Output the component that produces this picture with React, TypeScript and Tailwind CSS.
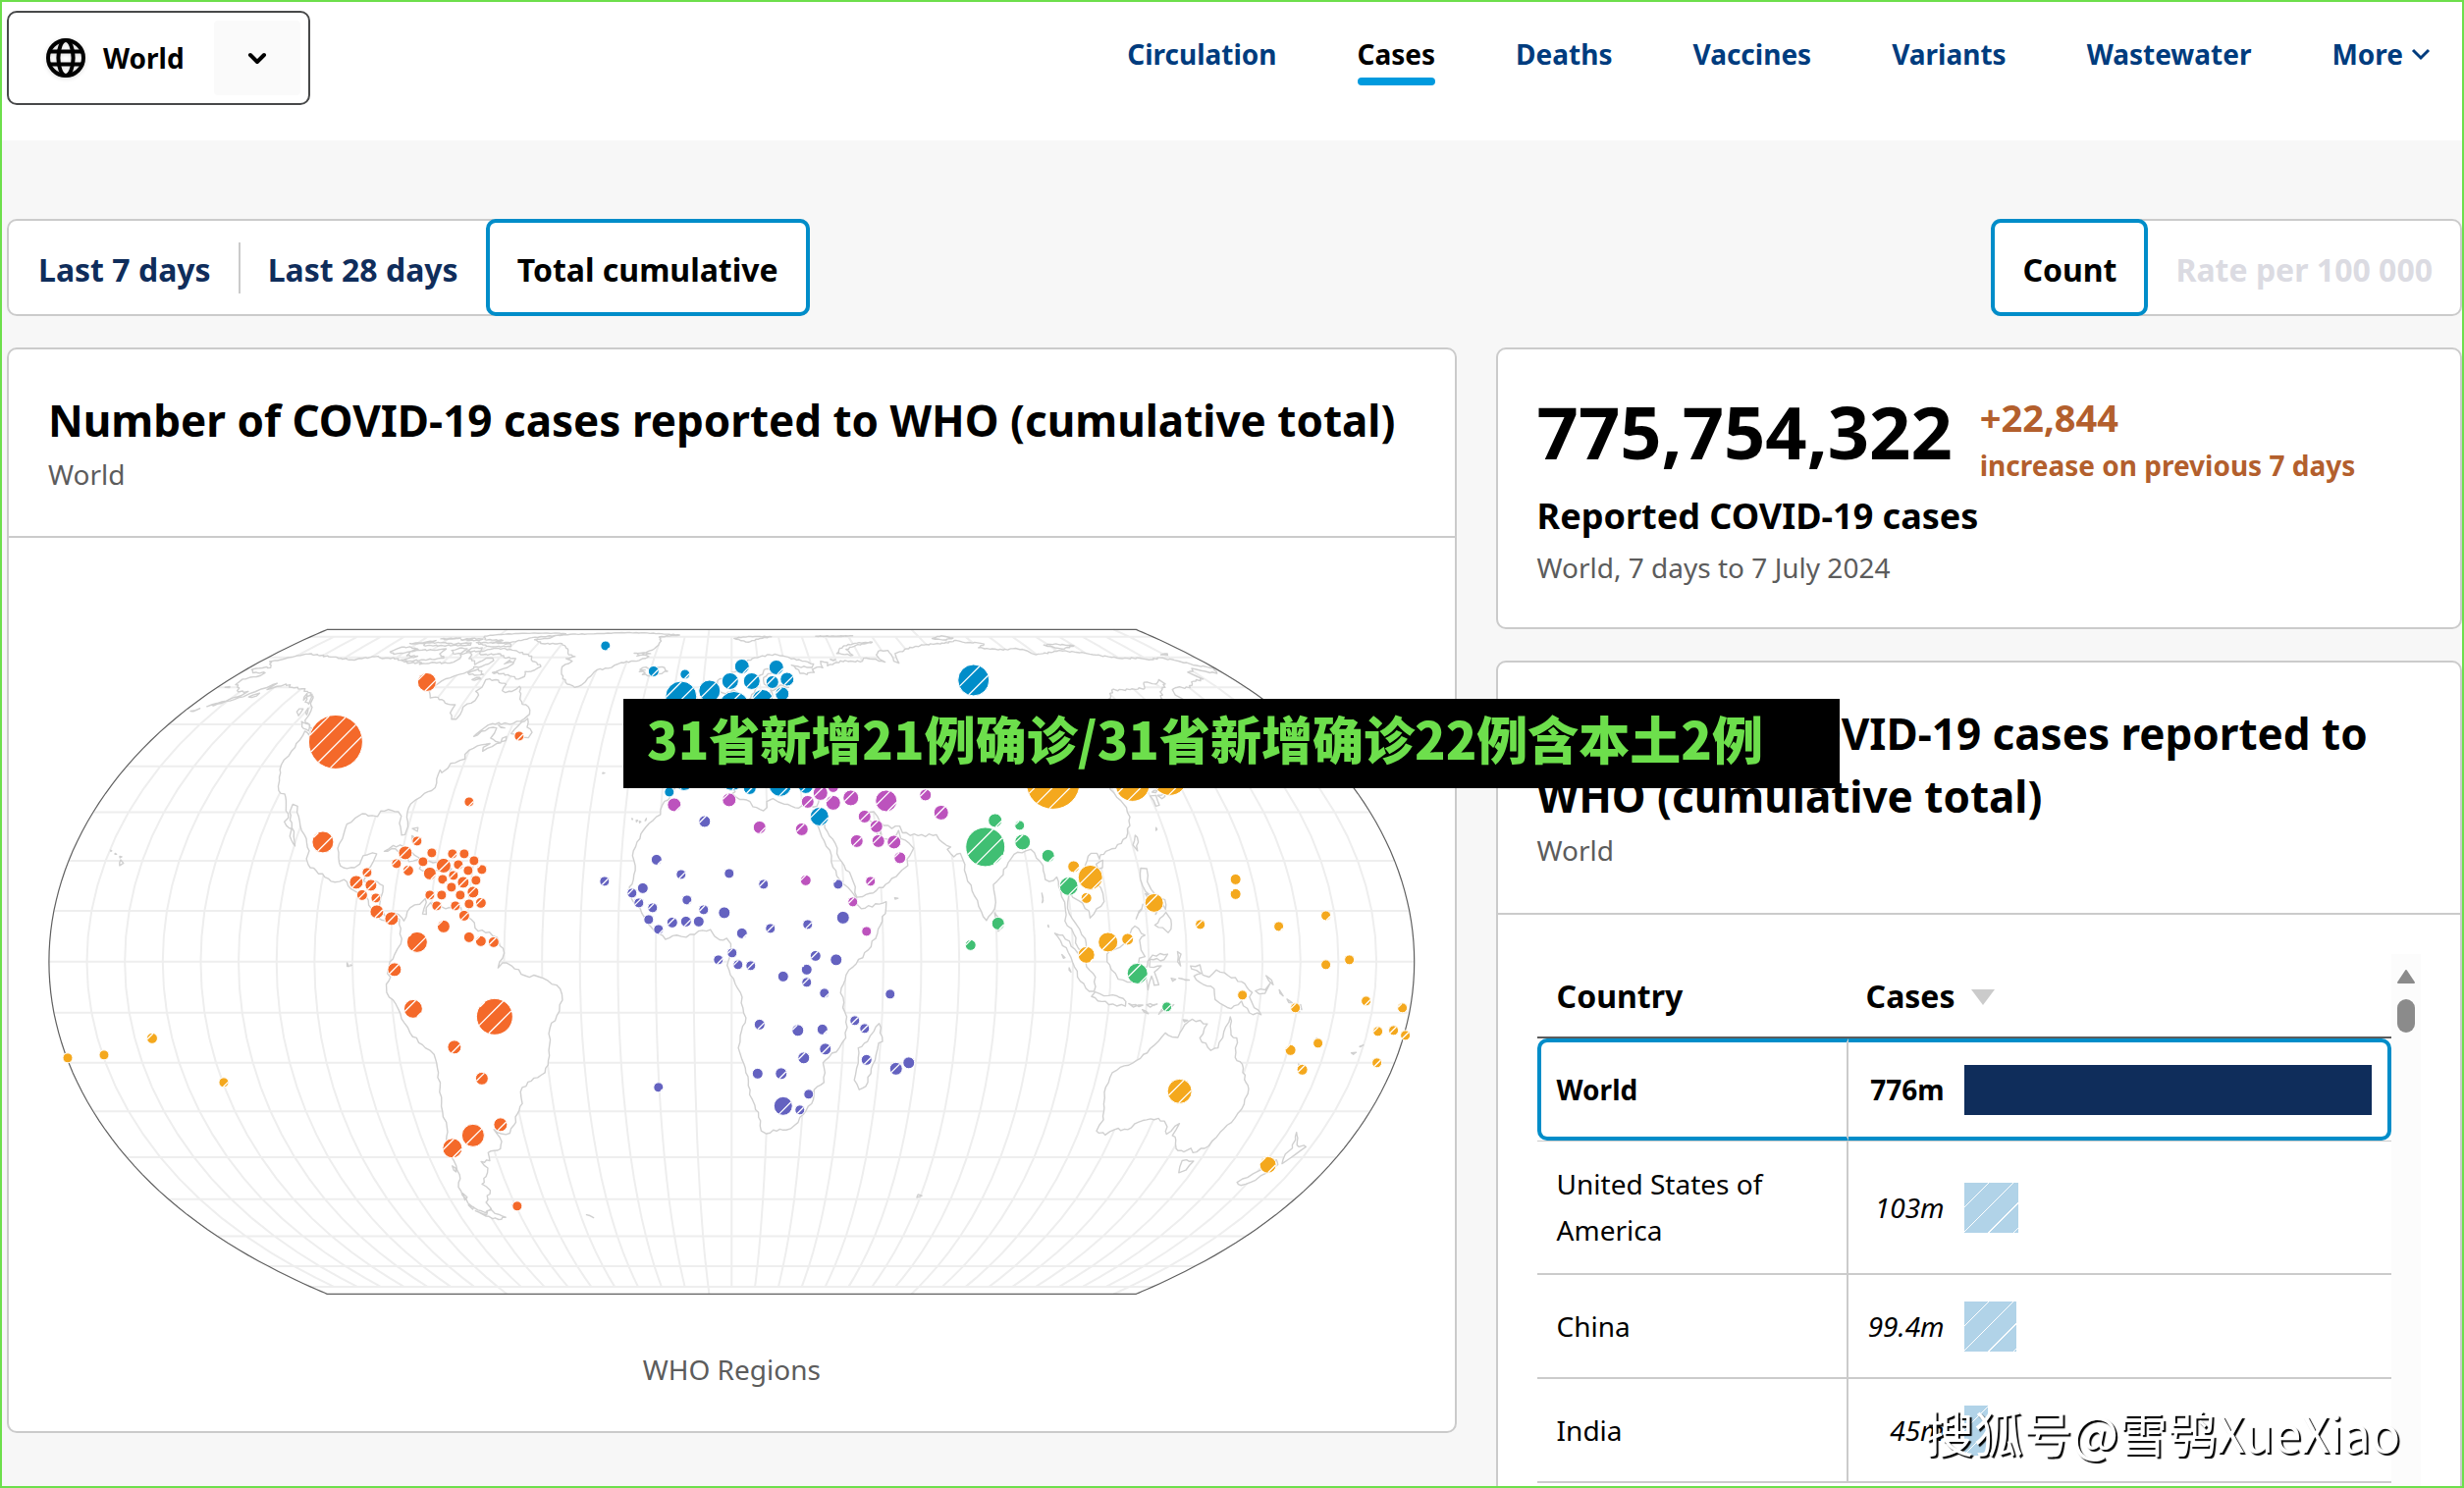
import React from "react";

type Bubble = [number, number, number];

const CENTER_X = 745.5;
const CENTER_Y = 980;
const SCALE = 257;
const CENTER_LON = 10;
const RAD = Math.PI / 180;

/* Equal Earth projection, centred on 10°E. */
function project(lon: number, lat: number): [number, number] {
  const m = Math.sqrt(3) / 2;
  const t = Math.asin(m * Math.sin(lat * RAD));
  const t2 = t * t;
  const t6 = t2 * t2 * t2;
  const l = Math.max(-180, Math.min(180, lon - CENTER_LON)) * RAD;
  const x = (l * Math.cos(t)) / (m * (1.340264 - 3 * 0.081106 * t2 + t6 * (7 * 0.000893 + 9 * 0.003796 * t2)));
  const y = t * (1.340264 - 0.081106 * t2 + t6 * (0.000893 + 0.003796 * t2));
  return [CENTER_X + SCALE * x, CENTER_Y - SCALE * y];
}

function line(points: [number, number][], close = false): string {
  return (
    points
      .map(([lon, lat], i) => {
        const [x, y] = project(lon, lat);
        return (i ? "L" : "M") + x.toFixed(1) + " " + y.toFixed(1);
      })
      .join("") + (close ? "Z" : "")
  );
}

function meridian(lon: number, limit: number): string {
  const pts: [number, number][] = [];
  for (let lat = -limit; lat <= limit; lat += 5) pts.push([lon, lat]);
  return line(pts);
}

const graticule: string[] = [];
for (let lon = -160; lon <= 180; lon += 10) graticule.push(meridian(lon, lon % 90 === 0 ? 90 : 80));
for (let lat = -80; lat <= 80; lat += 10) graticule.push(line([[-170, lat], [190, lat]]));

const sphere = (() => {
  const pts: [number, number][] = [];
  for (let lat = -90; lat <= 90; lat += 2) pts.push([-170, lat]);
  for (let lat = 90; lat >= -90; lat -= 2) pts.push([190, lat]);
  return line(pts, true);
})();

/* Small deterministic wobble so that long segments read as coast, not as rulers. */
function roughen(points: [number, number][]): [number, number][] {
  const out: [number, number][] = [];
  points.forEach((p, i) => {
    const q = points[(i + 1) % points.length];
    out.push(p);
    const d = Math.hypot(q[0] - p[0], q[1] - p[1]);
    const n = Math.min(8, Math.floor(d / 0.9));
    for (let k = 1; k < n; k++) {
      const f = k / n;
      const s = Math.sin((p[0] * 12.99 + p[1] * 78.2 + k * 37.7) * 3.1) * 0.26;
      out.push([p[0] + (q[0] - p[0]) * f + s * ((q[1] - p[1]) / d), p[1] + (q[1] - p[1]) * f - s * ((q[0] - p[0]) / d)]);
    }
  });
  return out;
}

const coastData: string[] = [
  // Americas
  "-168,65.6 -164,66.5 -162,66.2 -163.5,67.1 -166.5,68.4 -163,69.2 -160,70.6 -156.6,71.3 -152,70.8 -145,70.1 -141,69.6 -136,69 -133,69.5 -128,70.4 -125,69.5 -121,69.8 -115,68.3 -112,67.8 -108,68 -108,67.4 -103,68 -98,67.8 -96,68.2 -95,69.5 -96.5,71 -94.5,72 -92,71 -91.5,69.5 -88.5,68.7 -87,67.3 -85.5,68.7 -85,69.7 -82.5,69.7 -81.3,68.8 -82,67.5 -84.5,66.3 -86.5,66.5 -86,66 -88,64.3 -90.5,63.5 -93.5,61.9 -94.7,60 -94.6,58.8 -92.5,57 -90.8,57.2 -88,56.5 -85,55.3 -82.3,55.1 -82.2,52.9 -80.5,51.3 -79,51.3 -78.6,52.5 -79.2,54.5 -76.6,56.3 -76.7,57.8 -78.5,58.8 -77.4,60 -78.1,62.3 -74.5,62.3 -71.5,61.2 -69.6,60.9 -69.5,59 -68,58.5 -66,58.8 -64.5,60.3 -62.5,58.2 -61.7,56.6 -60,55.2 -57.5,54.5 -56,52.6 -57.1,51.4 -60,50.2 -66.5,50.2 -68.6,49 -70.5,47 -67,49.1 -64.6,49.1 -64.5,47.8 -65,46.6 -63,45.8 -61.3,45.5 -63.5,44.6 -65.8,43.5 -66.1,44.4 -64.5,45.3 -67,45 -70,43.8 -70.8,42.8 -70.2,41.7 -71.5,41.4 -74,40.7 -74.2,39.6 -75.5,38.6 -76.3,39.2 -76.3,37.2 -75.8,35.3 -77.5,34.4 -79,33.3 -81.2,31.8 -81.4,30 -80.1,27 -80.3,25.3 -81.2,25.2 -82.7,27.7 -82.8,29.2 -84,30.1 -86,30.4 -89,30.3 -89.4,29.1 -91,29.3 -94,29.7 -95.5,28.8 -97.3,27.5 -97.3,25.5 -97.8,22.5 -96.5,19.7 -95,18.6 -92,18.6 -90.8,19.3 -90.4,21 -88,21.6 -86.8,21.4 -87.7,18.8 -88.3,18.3 -88.9,15.9 -86,15.9 -83.4,15 -83.6,12.5 -83.7,11 -82,9 -79.6,9.6 -77.4,8.6 -76.8,8 -75.5,10.6 -73,11.3 -71.7,12.4 -71.3,11.7 -71.8,10.4 -72,9.4 -71,9.3 -71.2,10.6 -70.2,11.6 -68.3,10.7 -66,10.4 -62,10.7 -61,9 -59,8.3 -57,6 -54,5.8 -52,4.8 -50,1.7 -51.2,0 -51.6,-1.2 -50.4,-.2 -48.5,-.6 -48,-.8 -44.5,-2.7 -41,-2.9 -38.5,-3.7 -35.3,-5.3 -34.8,-7.5 -36.5,-10.6 -38.5,-13 -39,-16.5 -39.7,-19.5 -41,-22 -43.2,-23 -46,-23.9 -48.5,-25.9 -48.6,-28.4 -50.5,-30.5 -52.3,-33 -54,-34.7 -56.5,-34.8 -58.3,-33.9 -57.2,-35.6 -57,-36.5 -58,-38.1 -62,-39 -62.3,-40.8 -65,-41 -63.7,-42.5 -65.3,-44.5 -67.5,-46.3 -65.8,-47.8 -69,-50.8 -68.4,-52.4 -71,-53.5 -73,-52.8 -75,-51 -75.3,-47 -73.5,-45 -73,-42 -73.7,-39.5 -73.2,-37 -71.6,-33.5 -71.5,-30 -70.5,-25 -70.1,-20 -70.4,-18.3 -72.5,-17 -76,-14 -77.2,-12 -79,-8.3 -81.2,-6 -81.2,-4.4 -80,-3 -80.8,-2.3 -80.1,0 -78.9,1.4 -77.3,3.5 -77.5,6.5 -78,8.3 -79.5,9 -80.5,7.4 -82.8,8.2 -83.6,8.6 -85,10 -85.8,10.5 -87.5,12.8 -89.5,13.4 -92,14.4 -94.2,16.2 -96.5,15.7 -99.5,16.7 -102.2,18 -104.7,19.2 -105.6,20.4 -105.4,22 -108,25.2 -109.3,26.2 -110.7,28 -112.5,30 -113.1,31.3 -114.7,31.7 -114.6,30 -112.8,27.8 -111.3,26 -109.7,23 -110.3,23.4 -112,25 -112.2,26.5 -114,27.2 -115,28 -114.3,28.8 -115.8,30.3 -117.1,32.5 -118.4,33.9 -120.6,34.6 -122,36.8 -123.8,39.3 -124.3,40.4 -124,43.5 -124,46.2 -124.6,48.3 -122.4,47.4 -123,49 -127.5,51 -128.5,53.5 -130.4,55 -133,57.5 -136,58.5 -139.7,59.6 -144,60 -147.5,61 -151.5,59.3 -151,61.2 -153.8,59.5 -156.5,57.3 -161,55.5 -164.5,54.6 -161.5,55.9 -157.7,57.7 -157.2,58.8 -160.5,58.7 -162,59.8 -165,60.8 -165.5,62.5 -161,63.6 -161,64.5 -165.5,64.5",
  // Tierra del Fuego
  "-68.6,-52.7 -68,-53.7 -65.2,-54.7 -68,-55.3 -71.5,-54.4 -74,-53 -71,-54 -70,-53",
  "-75,-48.5 -74.2,-49.5 -75.4,-50.2",
  "-74.2,-42 -73.5,-42.5 -73.8,-43.4 -74.3,-43",
  "-75.2,-51.5 -73.8,-52 -74.6,-52.6",
  // Greenland
  "-73,78.2 -68,76 -60,76 -56,73.5 -54,71 -51,70.3 -54,69.5 -51,68.5 -53.5,66.5 -52,64 -49,61.5 -45,60 -42.8,60.8 -41,63.5 -39.8,65.5 -36,66 -32,68 -25.5,68.8 -22.3,70.3 -25,71.5 -21.8,73 -20,75.2 -19.5,77.5 -21,80 -12.5,81.4 -18,82.1 -28,83.3 -38,83.6 -50,82.3 -60,82 -66,80.8 -67,79.3",
  "-27,70.5 -25.5,70.9 -28.5,71.6 -25,71.8 -22,71.5",
  // Canadian Arctic
  "-61.5,66.6 -63.8,65 -66,64.9 -65,63.3 -66.5,62.5 -71.5,63.9 -77.8,64.6 -73.8,66.2 -72.7,67.5 -73.5,69.5 -78.5,70 -81,71.3 -88.5,71 -90,72.3 -86,73.7 -81,73.5 -77,72.8 -71,71.2 -68,70.4 -67,69 -64,67.9",
  "-117,69 -113,68.6 -105.5,69.2 -101.5,69.7 -105,71.3 -105,73.5 -108,73 -114,73 -118,72.4 -117,70.6 -112.5,70.4",
  "-123,71.2 -125.8,72.2 -124,74.3 -120,74.2 -116,73.3 -119,72",
  "-100,71.5 -97,71.5 -96.5,73.5 -99,73.9 -102,72.8",
  "-90,72.5 -95.5,72.3 -95,73.9 -91,74",
  "-80,74.7 -88,74.5 -92,75.3 -96,76.6 -90,76.6 -81,75.8",
  "-97,75.2 -104,75.1 -108,75 -116,75.1 -117,76.4 -109,76.6 -105,75.8 -98,76.5",
  "-76.5,78.5 -82,76.6 -89,76.5 -86,77.8 -94,78.3 -96,80.5 -91,81.8 -80,83 -65,83 -62,82.4 -66,81 -75,79.5",
  "-96,77.7 -104,78.2 -100,79 -95,78.6",
  "-114,77.7 -119,76.5 -123,76.1 -120,75.9 -115,76.4",
  "-110,78.3 -113,78.7 -105,79.2",
  "-86.5,64.4 -84,65.7 -80.5,64 -83.5,63.7",
  "-83,62.3 -80,62.5 -82,63",
  "-76,67.5 -73.5,68.2 -75.2,68.9",
  // Newfoundland and the Gulf of St Lawrence
  "-59.2,47.7 -55.8,46.9 -53.3,46.7 -52.8,48 -55,49.3 -56,51.5 -57.5,50.5",
  "-64.4,49.8 -62,49.1 -63.6,49.4",
  "-61.4,46.6 -60.3,47 -60,46 -61.3,45.7",
  // Pacific coast islands
  "-128.3,50.7 -125,50 -123.5,48.4 -125.8,49",
  "-133,54 -131.7,54 -131,52.2 -132.8,53.2",
  "-134,58 -132.5,56.5 -131.5,55.3 -133.3,55.8 -134.8,57.2",
  "-136,58.2 -134.9,57.4 -134.7,56.4 -135.6,57.2",
  "-130.3,54.2 -129.2,53.2 -128.6,52.4 -129.8,53.1",
  "-154.5,57.2 -152.3,57.5 -152.5,58.3 -154,57.8",
  "-168,53.4 -166,54.1 -167,53.3",
  "-166,60.2 -165.6,59.9 -167.3,60",
  // Caribbean
  "-84.9,21.9 -82.8,23.1 -80,22.9 -77.3,21.7 -74.2,20.2 -77.6,19.8 -78.5,21.2 -82,22.4",
  "-74.4,18.4 -73,19.9 -70,19.7 -68.4,18.6 -71.4,17.6",
  "-67.2,18.4 -65.7,18.4 -66,18",
  "-78.3,18.4 -76.3,18.1 -77.5,17.8",
  "-78.3,25.1 -77.8,23.8 -77.6,24.8",
  "-78.7,26.6 -77.2,26.8 -77.1,26",
  // Hawaii
  "-156,20.2 -154.9,19.5 -155.7,19 -156,19.6",
  "-156.6,20.9 -156,20.8 -156.4,20.6",
  "-158.2,21.5 -157.7,21.3 -158.1,21.3",
  "-159.7,22.1 -159.4,22 -159.6,21.9",
  // Galapagos
  "-91.4,-.2 -90.9,-.9 -91.4,-.9",
  "-90.5,-.6 -90.2,-.7 -90.5,-.8",
  // Falklands and South Georgia
  "-61,-51.4 -58,-51.5 -60,-52.2",
  "-38,-54 -36,-54.8 -37,-54.3",
  // Iceland
  "-24,65.6 -22,66.4 -20.3,65.7 -16,66.5 -13.6,65 -18.5,63.5 -22.5,63.9 -21.8,64.6 -24,64.9 -22,65.4",
  // Great Britain
  "-5,58.6 -3,58.6 -2,57.5 0,53 1.5,52.5 1,51 -5,50 -4,53 -3,54.9 -5,55.5 -6,57",
  // Eurasia and Africa
  "28,71 31,70.3 33,69.4 36,69.1 41,67.5 40,66.3 35,66.6 32.5,67.1 34.8,65.5 35,64.3 37.5,63.9 37.8,64.4 40.3,64.6 40,65.6 42,66.4 44,66.2 44,68.5 46.5,68 46,66.9 49,67.8 53.5,68.8 54.5,68.4 60,68.5 61,69.6 64.5,69.3 68.5,68.2 67,69.5 66.8,71 68.5,72.5 72.5,72.8 72.7,71 72,68.5 73.5,67.8 74,70 74.5,71.5 76,72 78,72.3 80.5,73.6 87,75 90,75.6 98,76.2 104.3,77.7 107,76.5 112,76.5 114,75.8 110,74 113,73.7 119,73 123.5,73.6 127,73.3 129.5,71 133,71.5 139.5,72.4 141,72.8 150,71.6 153,70.9 159.5,69.7 161,69.5 168,69.7 170.5,69 176,69.8 180,68.9 185,67 189.8,66.1 187.5,64.3 184.5,65 181.3,66 180,65 177.5,64.7 179.3,62.5 174.5,61.8 170.3,59.9 166,60 163.2,59.3 162,57.8 163.2,56 161.7,55 160,53.2 156.7,51 155.6,55 156,57 159,59 163.3,61 163,62.3 160,61 156.5,61.5 154.3,59.8 148.5,59.3 142,59.2 135.2,54.8 139,54 141,53 140,48.5 135.5,44.2 132,43.2 130,42 127.5,39.7 129.4,37 129.2,35.3 126.4,34.6 126.5,37.5 125,38 124.5,40 121.5,39 121.8,40.8 118,39.2 119,37.3 122.4,37.2 119.3,35 121,32.5 121.8,31 121.8,29 119.6,25.6 117,23.5 114,22.4 110.5,21.2 110,20.4 109.7,21.5 108,21.5 106.5,20 105.7,19 107.5,16.5 109.2,13.5 109.2,11.8 107,10.4 105,8.6 104.9,10 102.5,12 101,12.7 100.6,13.4 100,13 99.3,10.5 100.3,8.4 102,6.4 103.4,4.5 103.5,2.5 104.2,1.4 103.5,1.3 101.3,2.9 100.4,5.5 98.3,8 98.7,10.5 98,14 97.5,16.7 95.3,15.8 94.3,16.2 94.3,19 91.8,22.3 90.4,22 88,21.7 87,21.3 85,19.6 82.3,16.6 80.2,15.2 80.3,13 79.9,10.4 78.2,8.9 77.5,8.1 76.3,9.9 74.8,13 73.2,17 72.8,20.3 72.4,21.5 70.5,20.8 69,22.3 70,22.8 68,23.7 66.6,25.3 61.5,25.1 57.3,25.7 56.8,27.1 54.5,26.6 51.5,27.9 50.1,30.1 48.6,30 48,29.5 50,26.7 50.3,25.5 50.8,24.8 51.3,26.1 51.5,24.5 54,24.1 56.3,26.2 56.6,24.5 58.7,23.6 59.8,22.5 57.7,20.3 57.7,19 55.2,17.5 52.2,15.6 48.7,14 45,12.8 43.4,12.7 42.7,15.7 42.2,16.8 39.2,20.5 38.5,23.5 36.5,26 34.9,29.4 34.3,28 33.2,28.6 32.5,30 32.6,29.8 33.5,27.8 35.5,24 37.2,21 37.4,18.7 39.5,15.4 41.2,14.6 43.2,12.5 43.1,11.5 44.5,10.4 51.2,11.8 51,10.4 48.5,5.5 46,2.3 42,-1 40.2,-2.6 38.8,-6.1 39.5,-7 39.5,-9 40.6,-10.8 40.6,-15 39,-17 36.3,-18.9 34.8,-20 35.5,-22 35.4,-24 32.8,-25.5 32.8,-27.5 31,-29.8 28,-33 25.7,-34 22,-34 20,-34.8 18.5,-34.2 18.2,-32 16.5,-28.7 15,-26.5 14.5,-22.8 12.8,-19.3 11.8,-17 12.3,-14.5 13.8,-11 13,-9 12.3,-6 9.7,-2.6 8.8,-.7 9.5,1 9.8,3.5 8.7,4.6 6.8,4.3 5.5,5 4.4,6.3 1.2,6 -2,4.8 -4.5,5.2 -7.5,4.4 -9.2,5.5 -11.4,6.9 -13.2,8.8 -15,11 -16.7,12.4 -17.4,14.7 -16.4,16.2 -16.1,19 -17,21 -16,23.8 -14.5,26.2 -13,27.7 -10,29.5 -9.7,31.5 -6.8,34 -5.9,35.8 -2.5,35.2 0,36 5,36.8 10,37.3 11,36.9 10.5,35.5 11,34.4 10.2,34 11.5,33.1 15.2,32.3 16,31.2 19,30.3 20,31 20,32.3 21.8,32.9 23.3,32.2 25,31.7 29,30.9 31,31.5 34.2,31.3 35,33 36,36.3 30,36.3 27,37.5 26.5,40 23,40 23,37 20,39.5 19,42 13.5,45.5 16,41 18,40 16,38 12,42 8,44 3,43 0,39 -5,36.5 -9,37 -9,43 -2,43.5 -1,46 -4,48.5 2,51 5,53.5 8.5,54 8.1,56.8 10.6,57.7 10,56 11,54 14,54 19,54.5 21,55 21.5,57.5 24,57.3 23.5,59.2 28,59.6 30,60 28,60.6 23,59.9 21.5,61 21.5,63 25.3,65 24,65.8 22,65.5 21.3,64 17.5,62.2 17.2,60.7 18.8,60 16.5,57 14.3,55.5 12.8,55.5 11.2,59 10.5,59.3 8,58.1 5.6,58.8 5,62 8.5,63.5 12,65.5 14.5,68 19,69.8 25,71",
  // Arctic islands of Eurasia
  "11,79 15,80 20,80.3 27,80.1 22,79 17,76.8 14,77.6",
  "51.5,71.5 53,73 56,75 62,76.3 68.5,76.8 61,75.2 56,73.3 57.5,70.8",
  "95,79 100,80.8 104,79.2 99,78",
  "138,75.3 143,75.8 150,75 143,73.4",
  "178.5,71 182,71.5 181,70.9",
  "46,80.5 54,80.6 62,80.8 55,80.2",
  "48,69.2 50,69.1 49,68.7",
  // Madagascar, Socotra, Sri Lanka
  "49.3,-12.1 50.5,-15.7 49.5,-16 49,-18.5 47,-24.8 45.3,-25.5 43.7,-23.5 44.4,-20 44.1,-17 46.5,-15.7 48,-13.7",
  "53.5,12.6 54.4,12.5 53.6,12.3",
  "79.8,9.6 81.3,8.4 81.8,6.8 80.5,6 79.8,7.5",
  // Andamans and Nicobars
  "92.9,13.5 93,12 92.7,11.6",
  "93.8,7.2 93.9,6.8 93.7,7",
  // Hainan, Taiwan, Philippines
  "108.8,19.3 110.8,20.1 110.3,18.6 109,18.3",
  "121.5,25.2 121.9,24.8 120.9,22 120.1,23.2",
  "120.6,18.5 122.2,18.4 121.6,15.8 122.3,14.2 124,13 123.5,12.6 120.7,13.8 119.9,16.3",
  "125.3,9.7 126.4,8.3 126.2,6.4 125.4,5.7 124,6.7 122,7.2 123.5,8.5",
  "122,11.8 123.2,11.5 122,10.5",
  "123.4,10.9 122.5,9.3 124,10.8",
  "124.4,12.5 125.5,12.2 125.3,10.3 124.8,11.2",
  "119.4,11.3 117.2,8.4 118.9,10.2",
  "120.5,13.4 121.4,13.1 121.1,12.3",
  // Japan
  "130,33.5 131.7,33.6 131.4,31.5 130.3,31.3",
  "132.2,33.6 134.5,34.2 134.2,33.4 133,32.9",
  "131,34.3 135,35.6 140,37 140.7,35.6 138.6,34.7 135.8,33.6 134,34.7",
  "128,26.8 128.1,26.4 127.7,26.2",
  // Indonesia, Malaysia, New Guinea
  "95.4,5.6 97.5,5.2 100.5,2.5 103.2,.7 103.6,-1 106,-3 105.8,-5.8 104.5,-5.8 102,-3.8 100.4,-1 98.8,1.8",
  "97.1,1.4 97.9,.8 97.5,.7",
  "99,-1.2 99.5,-2 99,-1.6",
  "105.2,-6.8 106.1,-5.9 108.5,-6.7 110.8,-6.5 112.7,-7 114.4,-7.8 114.4,-8.7 111,-8.3 108,-7.8",
  "109,1.5 109.6,2 111.3,2.5 113.5,3.5 115.3,5.5 116.7,7 119.2,5.2 117.7,4.2 118,2.3 119,1 117.5,.7 116.5,-1.7 116.2,-4 114.5,-4 112,-3.4 110.1,-1.5 109,0",
  "120,-5.5 119.5,-3.5 118.8,-2.7 119.8,.2 121,1.3 125,1.5 124,.4 120.3,.5 120.2,-1 123.3,-.8 121.5,-2 122.3,-3.5 122.8,-4.5 121.6,-4.6 120.8,-2.8 120.3,-4",
  "127.6,2 128.5,1.5 128,.4 128.4,-.8 127.6,0",
  "128,-3.2 130.8,-3.6 129,-3.4",
  "126,-3.2 127.2,-3.4 126.4,-3.8",
  "115.2,-8.2 116.5,-8.9 119,-8.5 118,-8.8",
  "120,-8.4 122.8,-8.3 121,-8.9",
  "123.5,-10.3 125,-8.9 127.2,-8.4 125.2,-9.4",
  "119,-9.4 120.7,-10.2 119.6,-9.9",
  "131,-.8 133.5,-.6 134.3,-2.6 136,-3 137.8,-1.6 141,-2.7 144.6,-3.9 147.6,-6 147,-6.9 148.6,-9 150.7,-10.4 147.5,-10 145,-7.7 142.5,-9.2 139.5,-8.2 138,-7.4 137.5,-5.3 133.5,-4 132,-2.8 133.8,-2.3 131.3,-1.4",
  "148.4,-5.7 151,-5.5 152.2,-4.2 151,-6.2 149.5,-6.3",
  "151,-2.7 153,-4.5 152.5,-3.6",
  "154.7,-5.5 155.9,-6.7 155,-6.2",
  "157,-7.3 158.5,-8 157.6,-8",
  "159.7,-9.3 160.8,-9.8 159.8,-9.8",
  "160.8,-8.4 161.3,-9.4 160.9,-9",
  // Pacific islands
  "164,-20.2 166.9,-22.2 165,-21.4",
  "166.8,-15 167.1,-15.5 166.7,-15.6",
  "167.4,-16.2 167.8,-16.5 167.4,-16.5",
  "177.3,-18 178.6,-17.9 178,-18.3",
  "179,-16.7 179.9,-16.4 179.2,-16.8",
  "145.8,43.4 145,43 141,41.5 140,42",
  // Australia and New Zealand
  "114,-22 113.7,-24 113.3,-26 114.2,-28.5 115.7,-31.8 115,-34.2 118,-35.1 120,-33.9 123.8,-33.9 126,-32.3 129,-31.6 131.2,-31.5 134,-32.7 135.6,-34.9 137.8,-32.6 137.5,-35.2 138.5,-35.5 139.7,-37 140.7,-38.1 143.5,-38.8 145,-38 146.4,-39 149.8,-37.5 150.8,-34.5 152.8,-31.5 153.5,-28.5 152.9,-25.3 150.8,-23.4 148.8,-20.3 146.3,-18.9 145.4,-15 143.7,-14.4 142.6,-10.8 141.6,-13.8 141,-17 139.2,-17.5 135.5,-15 136.8,-12.2 132.6,-11.3 130.8,-12.4 129.6,-14.9 128,-14.8 126,-14 123.6,-16.5 122.2,-18 119,-20 116.8,-20.6",
  "130.2,-11.4 131.4,-11.5 130.6,-11.8",
  "144.7,-40.8 148.2,-40.9 147.8,-43 146.2,-43.6 145.3,-42.3",
  "172.8,-34.5 174.8,-36.5 175.5,-37.3 178.5,-37.7 177,-39.5 175.3,-41.5 174,-39.3 174.8,-38",
  "172.7,-40.6 174.3,-41.7 172.8,-43.8 170.7,-45.8 168.5,-46.6 166.5,-45.9 170,-43.2 171.5,-41.8",
  "69,-48.8 70.4,-49.1 69,-49.6",
  // Canaries and Azores
  "-17.9,28.7 -17.7,28.5 -17.9,28.5",
  "-16.7,28.3 -16.3,28.3 -16.6,28",
  "-15.8,28.1 -15.4,28 -15.7,27.8",
  "-14.2,28.2 -13.9,28.7 -14,28.3",
  "-28,38.6 -27.4,38.5 -28,38.4",
];

const coast = coastData
  .map((s) => line(roughen(s.split(" ").map((p) => p.split(",").map(Number) as [number, number])), true))
  .join("");

const regions: { name: string; color: string; bubbles: Bubble[] }[] = [
  {
    name: "Americas",
    color: "#f4692a",
    bubbles: [
      [435, 695, 9], [342, 756, 27], [478, 817, 4.5], [329, 858, 10.5], [425, 857, 4.5], [413, 869, 6.5], [404, 880, 4.5],
      [416, 887, 5], [440, 869, 4.5], [431, 878, 4.5], [438, 890, 6], [452, 882, 7], [461, 870, 4.5], [473, 870, 4.5],
      [483, 877, 4.5], [467, 881, 4.5], [477, 887, 4.5], [491, 886, 4.5], [462, 892, 4.5], [451, 896, 4.5], [472, 899, 5.5],
      [485, 897, 4.5], [460, 904, 4.5], [469, 912, 4.5], [482, 909, 5.5], [438, 912, 4.5], [450, 912, 4.5], [445, 923, 4.5],
      [464, 923, 4.5], [478, 921, 4.5], [490, 920, 5], [473, 933, 5], [363, 899, 6.5], [374, 889, 4.5], [378, 902, 5.5],
      [369, 912, 5], [383, 915, 4.5], [384, 929, 6.5], [399, 936, 6.5], [452, 944, 6], [425, 960, 10], [478, 955, 5],
      [490, 959, 5], [503, 960, 5], [402, 988, 6.5], [421, 1028, 9], [504, 1036, 18], [463, 1067, 6.5], [491, 1099, 6],
      [510, 1146, 6.5], [482, 1157, 11], [461, 1170, 9.5], [527, 1229, 4.5], [529, 750, 4.5],
    ],
  },
  {
    name: "Europe",
    color: "#008dc9",
    bubbles: [
      [617, 658, 4.5], [666, 684, 5], [698, 687, 4.5], [694, 710, 15.5], [723, 704, 10.5], [744, 694, 8], [756, 679, 7],
      [766, 694, 8], [791, 680, 7], [787, 695, 6], [802, 692, 6.5], [777, 713, 10], [797, 707, 6.5], [748, 720, 15],
      [992, 693, 15.5], [682, 807, 4.5], [697, 795, 10], [746, 793, 12], [764, 803, 6], [795, 800, 11], [821, 801, 7],
      [835, 832, 9],
    ],
  },
  {
    name: "Eastern Mediterranean",
    color: "#bc53bd",
    bubbles: [
      [687, 820, 6.5], [743, 815, 6.5], [774, 843, 6], [817, 845, 6], [823, 817, 6], [836, 808, 7], [849, 818, 7],
      [849, 802, 5], [867, 813, 7.5], [903, 816, 10.5], [881, 832, 6], [893, 842, 6], [873, 857, 6], [895, 857, 6],
      [911, 858, 6.5], [917, 874, 5.5], [943, 810, 5.5], [959, 828, 7], [821, 897, 5], [887, 898, 4.5], [869, 919, 4.5],
      [883, 949, 4.5],
    ],
  },
  {
    name: "Africa",
    color: "#6462c0",
    bubbles: [
      [718, 837, 5.5], [669, 876, 5], [694, 891, 4.5], [743, 890, 4.5], [616, 898, 4.5], [778, 901, 4.5], [854, 901, 4.5],
      [655, 905, 5], [644, 910, 4.5], [651, 920, 4.5], [665, 925, 4.5], [700, 917, 4.5], [717, 927, 4.5], [738, 930, 5.5],
      [661, 937, 4.5], [671, 947, 4.5], [685, 940, 5], [699, 939, 5], [712, 939, 5], [756, 951, 5], [785, 946, 4.5],
      [823, 942, 4.5], [859, 935, 6], [831, 974, 5], [852, 978, 5.5], [746, 971, 4.5], [732, 978, 4.5], [752, 983, 4.5],
      [765, 984, 4.5], [798, 995, 5], [822, 988, 5], [822, 1001, 4.5], [840, 1012, 4.5], [774, 1044, 5], [813, 1050, 5.5],
      [838, 1049, 5], [871, 1040, 4.5], [881, 1048, 4.5], [841, 1069, 5.5], [819, 1078, 5.5], [883, 1080, 5],
      [772, 1094, 5], [796, 1094, 5.5], [671, 1108, 4.5], [824, 1115, 4.5], [798, 1127, 9], [815, 1131, 4.5],
      [907, 1013, 4.5], [913, 1089, 6], [926, 1083, 5.5],
    ],
  },
  {
    name: "South-East Asia",
    color: "#40bf73",
    bubbles: [
      [1004, 863, 19.5], [1014, 836, 6.5], [1039, 841, 4.5], [1042, 858, 7.5], [1068, 872, 6], [1089, 903, 9],
      [1017, 941, 6], [989, 963, 5], [1159, 992, 10], [1189, 1026, 4.5],
    ],
  },
  {
    name: "Western Pacific",
    color: "#f4a81d",
    bubbles: [
      [1073, 797, 27], [1154, 799, 17], [1192, 793, 17], [1094, 883, 5.5], [1111, 894, 12], [1107, 915, 5],
      [1176, 920, 9], [1129, 960, 9.5], [1149, 957, 5.5], [1107, 973, 8], [1259, 896, 5], [1259, 911, 5], [1223, 942, 4.5],
      [1303, 944, 4.5], [1351, 933, 4.5], [1375, 978, 4.5], [1351, 983, 4.5], [1266, 1014, 4.5], [1320, 1027, 4.5],
      [1392, 1020, 4.5], [1429, 1027, 4.5], [1404, 1051, 4.5], [1420, 1050, 4.5], [1432, 1055, 4.5], [1315, 1070, 5],
      [1343, 1063, 4.5], [1327, 1090, 5], [1403, 1083, 4.5], [1202, 1112, 12], [1292, 1187, 8], [69, 1078, 4.5],
      [106, 1075, 4.5], [155, 1058, 5], [228, 1103, 4.5],
    ],
  },
];

/* Diagonal hatching is clipped to each bubble. */
function Hatch({ bubble: [cx, cy, r] }: { bubble: Bubble }) {
  const lines: string[] = [];
  const reach = r * Math.SQRT2;
  const start = Math.ceil((cx + cy - reach - 3) / 18) * 18 + 3;
  for (let sum = start; sum < cx + cy + reach; sum += 18) {
    const off = (sum - cx - cy) / 2;
    const half = Math.sqrt(Math.max(0, r * r - 2 * off * off) / 2);
    lines.push(`M${cx + off - half} ${cy + off + half}L${cx + off + half} ${cy + off - half}`);
  }
  return <path d={lines.join("")} stroke="#fff" strokeWidth="1.3" />;
}

function WorldMap() {
  return (
    <svg viewBox="9 548 1473 800" className="block w-full" fill="none" role="img" aria-label="Map of cumulative cases by country">
      <path d={graticule.join("")} stroke="#eeeeee" strokeWidth="2" />
      <path d={coast} fill="#fff" stroke="#d0d0d0" strokeWidth="1.4" strokeLinejoin="round" />
      <path d={sphere} stroke="#606060" strokeWidth="1.2" />
      {regions.map((region) => (
        <g key={region.name}>
          {region.bubbles.map((b, i) => (
            <g key={i}>
              <circle cx={b[0]} cy={b[1]} r={b[2] + 0.5} fill={region.color} stroke="#fff" strokeWidth="1" />
              <Hatch bubble={b} />
            </g>
          ))}
        </g>
      ))}
    </svg>
  );
}

function GlobeIcon() {
  return (
    <svg viewBox="0 0 40 40" className="size-10 drop-shadow-sm" fill="none" stroke="#000" strokeWidth="4" aria-hidden="true">
      <circle cx="20" cy="20" r="18" />
      <ellipse cx="20" cy="20" rx="7.6" ry="18" />
      <path d="M3 13.6h34M3 26.6h34" />
    </svg>
  );
}

const navItems = ["Circulation", "Cases", "Deaths", "Vaccines", "Variants", "Wastewater"];

const rows = [
  { country: "World", value: "776m", share: 100 },
  { country: "United States of America", value: "103m", share: 13.4 },
  { country: "China", value: "99.4m", share: 12.8 },
  { country: "India", value: "45m", share: 5.8 },
];

function CasesTable() {
  return (
    <table className="w-full table-fixed border-separate border-spacing-0 text-[28px] leading-[47px]">
      <colgroup>
        <col className="w-[317px]" />
        <col />
      </colgroup>
      <thead>
        <tr className="text-left text-[32px]">
          <th scope="col" className="h-[86px] border-b-2 border-[#5c5c5c] pl-5 font-bold">Country</th>
          <th scope="col" className="h-[86px] border-b-2 border-[#5c5c5c] pl-[18px] font-bold">
            <button type="button" className="flex items-center gap-4">
              Cases
              <svg viewBox="0 0 24 16" className="mt-1 h-4 w-6" aria-hidden="true">
                <path d="M0 0h24L12 16z" fill="#cbcbcb" />
              </svg>
            </button>
          </th>
        </tr>
      </thead>
      <tbody>
        {rows.map((row, i) => (
          <React.Fragment key={row.country}>
            <tr className={i === 0 ? "font-bold" : ""}>
              <th
                scope="row"
                className={
                  i === 0
                    ? "h-26 rounded-l-[10px] border-y-4 border-r-2 border-l-4 border-[#008dc9] border-r-[#cbcbcb] pl-4 text-left font-bold"
                    : "border-r-2 border-b-2 border-[#cbcbcb] py-5 pr-5 pl-5 text-left font-normal"
                }
              >
                {row.country}
              </th>
              <td
                className={
                  i === 0
                    ? "h-26 rounded-r-[10px] border-y-4 border-r-4 border-[#008dc9] pr-4"
                    : "h-[106px] border-b-2 border-[#cbcbcb] pr-5"
                }
              >
                <div className="flex items-center gap-5">
                  <span className={i === 0 ? "w-[98px] text-right" : "w-[98px] text-right italic"}>{row.value}</span>
                  <div className="flex-1">
                    <div
                      className={
                        i === 0
                          ? "h-[51px] bg-[#0f2d5b]"
                          : "h-[51px] bg-[#b1d3e8] bg-[repeating-linear-gradient(135deg,transparent_0_17px,white_17px_18px)]"
                      }
                      style={{ width: `${row.share}%` }}
                    />
                  </div>
                </div>
              </td>
            </tr>
            {i === 0 && (
              <tr aria-hidden="true">
                <td colSpan={2} className="h-px bg-[#cbcbcb] p-0" />
              </tr>
            )}
          </React.Fragment>
        ))}
      </tbody>
    </table>
  );
}

export default function App() {
  return (
    <div className="relative h-screen overflow-hidden border-2 border-[#6ddf4c] bg-[#f7f7f7] font-['Noto_Sans','Noto_Sans_CJK_SC',sans-serif] text-black">
      <header className="flex h-[141px] items-start justify-between bg-white pt-[9px] pr-8 pl-[5px]">
        <button type="button" className="flex h-24 items-center rounded-[10px] border-2 border-[#48494a] pr-2 pl-[38px] text-[28px] font-bold">
          <GlobeIcon />
          <span className="mr-[30px] ml-[18px]">World</span>
          <span className="grid h-19 w-[88px] place-items-center rounded bg-[#fafafa]">
            <svg viewBox="0 0 20 14" className="h-[14px] w-5" fill="none" stroke="#000" strokeWidth="4" strokeLinecap="round" strokeLinejoin="round" aria-hidden="true">
              <path d="M3 4l7 7 7-7" />
            </svg>
          </span>
        </button>
        <nav className="flex gap-[82px] pt-6 text-[28px] leading-10 font-bold text-[#003c7e]">
          {navItems.map((item) =>
            item === "Cases" ? (
              <a key={item} href="#cases" aria-current="page" className="flex flex-col gap-1 text-black">
                {item}
                <span className="h-2 rounded-full bg-[#009ade]" />
              </a>
            ) : (
              <a key={item} href={`#${item.toLowerCase()}`}>{item}</a>
            ),
          )}
          <button type="button" className="flex h-10 items-center gap-2">
            More
            <svg viewBox="0 0 20 14" className="h-[14px] w-5" fill="none" stroke="currentColor" strokeWidth="3" aria-hidden="true">
              <path d="M2 3l8 8 8-8" />
            </svg>
          </button>
        </nav>
      </header>

      <div className="flex justify-between pt-20 pl-[5px] text-[32px] font-bold">
        <div className="flex h-[99px] items-center rounded-[10px] border-2 border-[#cbcbcb] bg-white">
          <button type="button" className="pr-7 pl-[30px] pt-1 text-[#0f2d5b]">Last 7 days</button>
          <span className="h-13 w-[2px] bg-[#cbcbcb]" />
          <button type="button" className="px-7 pt-1 text-[#0f2d5b]">Last 28 days</button>
          <button type="button" aria-pressed="true" className="-my-[2px] -mr-[2px] h-[99px] rounded-[10px] border-4 border-[#008dc9] bg-white px-7 pt-1">
            Total cumulative
          </button>
        </div>
        <div className="flex h-[99px] items-center rounded-[10px] border-2 border-[#cbcbcb] bg-white">
          <button type="button" aria-pressed="true" className="-my-[2px] -ml-[2px] h-[99px] rounded-[10px] border-4 border-[#008dc9] bg-white px-7 pt-1">
            Count
          </button>
          <button type="button" disabled className="px-7 pt-1 text-[#dbdbe2]">Rate per 100 000</button>
        </div>
      </div>

      <main className="grid grid-cols-[3fr_2fr] items-start gap-10 pt-8 pl-[5px]">
        <section className="rounded-[10px] border-2 border-[#cbcbcb] bg-white">
          <div className="border-b-2 border-[#cbcbcb] px-10 pt-10 pb-[39px]">
            <h2 className="text-[44px] leading-16 font-bold">Number of COVID-19 cases reported to WHO (cumulative total)</h2>
            <p className="text-[28px] leading-[47px] text-[#5c5c5c]">World</p>
          </div>
          <WorldMap />
          <p className="pt-6 pb-[39px] text-center text-[28px] leading-[47px] text-[#5c5c5c]">WHO Regions</p>
        </section>

        <div className="flex flex-col gap-8">
          <section className="rounded-[10px] border-2 border-[#cbcbcb] bg-white px-10 pt-[43px] pb-9">
            <div className="flex gap-7">
              <p className="text-[74px] leading-[82px] font-bold">775,754,322</p>
              <div className="font-bold text-[#b35f2d]">
                <p className="text-[38px] leading-[52px]">+22,844</p>
                <p className="text-[28px] leading-[47px]">increase on previous 7 days</p>
              </div>
            </div>
            <h3 className="text-[36px] leading-[55px] font-bold">Reported COVID-19 cases</h3>
            <p className="text-[28px] leading-[50px] text-[#5c5c5c]">World, 7 days to 7 July 2024</p>
          </section>

          <section className="rounded-[10px] border-2 border-[#cbcbcb] bg-white">
            <div className="border-b-2 border-[#cbcbcb] px-10 pt-10 pb-10">
              <h2 className="text-[44px] leading-16 font-bold">Number of COVID-19 cases reported to WHO (cumulative total)</h2>
              <p className="text-[28px] leading-[47px] text-[#5c5c5c]">World</p>
            </div>
            <div className="flex px-10 pt-10">
              <div className="min-w-0 flex-1 pb-10">
                <CasesTable />
              </div>
              <div className="flex w-[30px] flex-col items-center gap-4 bg-[#fcfcfc] pt-4">
                <svg viewBox="0 0 18 14" className="h-[14px] w-[18px]" aria-hidden="true">
                  <path d="M9 1l8 12H1z" fill="#8b8b8b" stroke="#8b8b8b" strokeWidth="2" strokeLinejoin="round" />
                </svg>
                <span className="h-[34px] w-[18px] rounded-full bg-[#8b8b8b]" />
              </div>
            </div>
          </section>
        </div>
      </main>

      <p className="absolute top-[710px] left-[633px] h-[91px] bg-black pr-[78px] pl-6 font-['Noto_Sans_CJK_SC',sans-serif] text-[52px] leading-[80px] font-black whitespace-nowrap text-[#6ddf4c]">
        31省新增21例确诊/31省新增确诊22例含本土2例
      </p>
      <p className="absolute right-[63px] bottom-5 font-['Noto_Sans_CJK_SC',sans-serif] text-[50px] leading-[72px] whitespace-nowrap text-white [text-shadow:2px_2px_1px_#000]">
        搜狐号@雪鸮XueXiao
      </p>
    </div>
  );
}
